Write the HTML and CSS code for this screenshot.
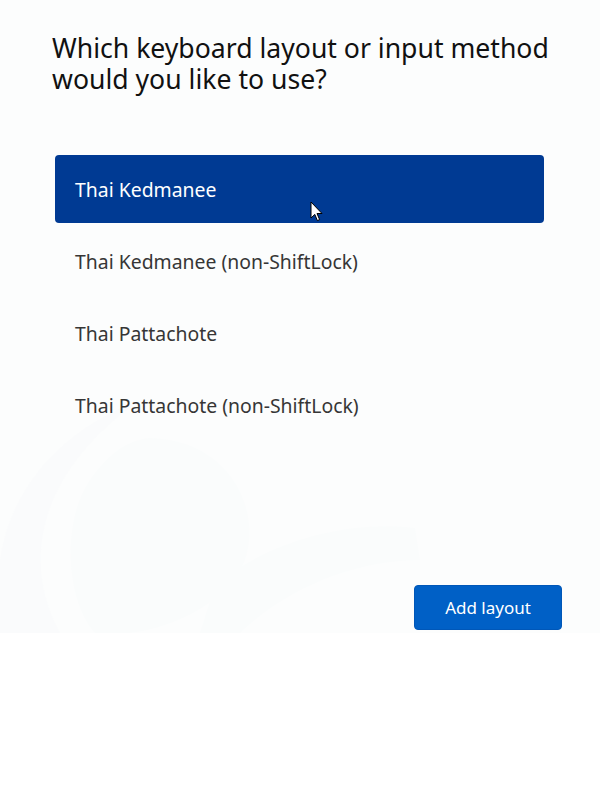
FILE: index.html
```html
<!DOCTYPE html>
<html lang="en">
<head>
<meta charset="utf-8">
<title>Keyboard layout</title>
<link rel="stylesheet" href="styles.css">
</head>
<body>
<main class="panel">
  <svg class="decor" width="600" height="633" viewBox="0 0 600 633" aria-hidden="true">
    <path d="M140 400 C60 430 10 490 0 560 L0 633 L60 633 C20 560 40 470 140 400 Z" fill="#fafbfc"/>
    <path d="M150 438 C230 440 262 510 245 560 C225 610 150 640 95 633 C65 600 62 520 90 480 C105 458 125 440 150 438 Z" fill="#fafcfc"/>
    <path d="M215 585 C270 540 350 520 415 528 L420 560 C360 560 290 585 240 633 L200 633 Z" fill="#fafcfc"/>
  </svg>
  <h1 class="title">Which keyboard layout or input method would you like to use?</h1>
  <ul class="list">
    <li class="item selected">Thai Kedmanee
      <svg class="cursor" width="14" height="22" viewBox="0 0 14 22" aria-hidden="true">
        <path d="M1 1 L1 17 L4.8 13.4 L7.4 19.6 L9.6 18.6 L7 12.5 L12 12.5 Z" fill="#fff" stroke="#000" stroke-width="1" stroke-linejoin="miter"/>
      </svg>
    </li>
    <li class="item">Thai Kedmanee (non-ShiftLock)</li>
    <li class="item">Thai Pattachote</li>
    <li class="item">Thai Pattachote (non-ShiftLock)</li>
  </ul>
  <div class="actions">
    <button class="primary" type="button">Add layout</button>
  </div>
</main>
</body>
</html>
```
FILE: styles.css
```css
html, body {
  margin: 0;
  padding: 0;
  background: #ffffff;
}
body {
  font-family: "Noto Sans", "Open Sans", sans-serif;
  color: #1b1b1b;
}
.panel {
  position: relative;
  overflow: hidden;
  box-sizing: border-box;
  height: 633px;
  background: #fcfdfd;
  display: flex;
  flex-direction: column;
  padding: 33px 38px 3px 52px;
}
.decor {
  position: absolute;
  left: 0;
  top: 0;
  z-index: 0;
  pointer-events: none;
}
.title, .list, .actions {
  position: relative;
  z-index: 1;
}
.title {
  margin: 0;
  font-size: 26.6px;
  line-height: 31px;
  font-weight: 400;
  color: #111;
  max-width: 520px;
}
.list {
  list-style: none;
  margin: 60px 18px 0 3px;
  padding: 0;
  display: flex;
  flex-direction: column;
  gap: 4px;
}
.item {
  position: relative;
  height: 68px;
  display: flex;
  align-items: center;
  padding-left: 20px;
  font-size: 19.4px;
  color: #363636;
  border-radius: 4px;
}
.item.selected {
  background: #003a93;
  color: #ffffff;
}
.cursor {
  position: absolute;
  left: 255px;
  top: 46px;
}
.actions {
  margin-top: auto;
  display: flex;
  justify-content: flex-end;
}
.primary {
  width: 148px;
  height: 45px;
  border: 1px solid #0057b8;
  border-radius: 4px;
  background: #0060c6;
  color: #fff;
  font-family: inherit;
  font-size: 17px;
  padding: 0;
}
```
